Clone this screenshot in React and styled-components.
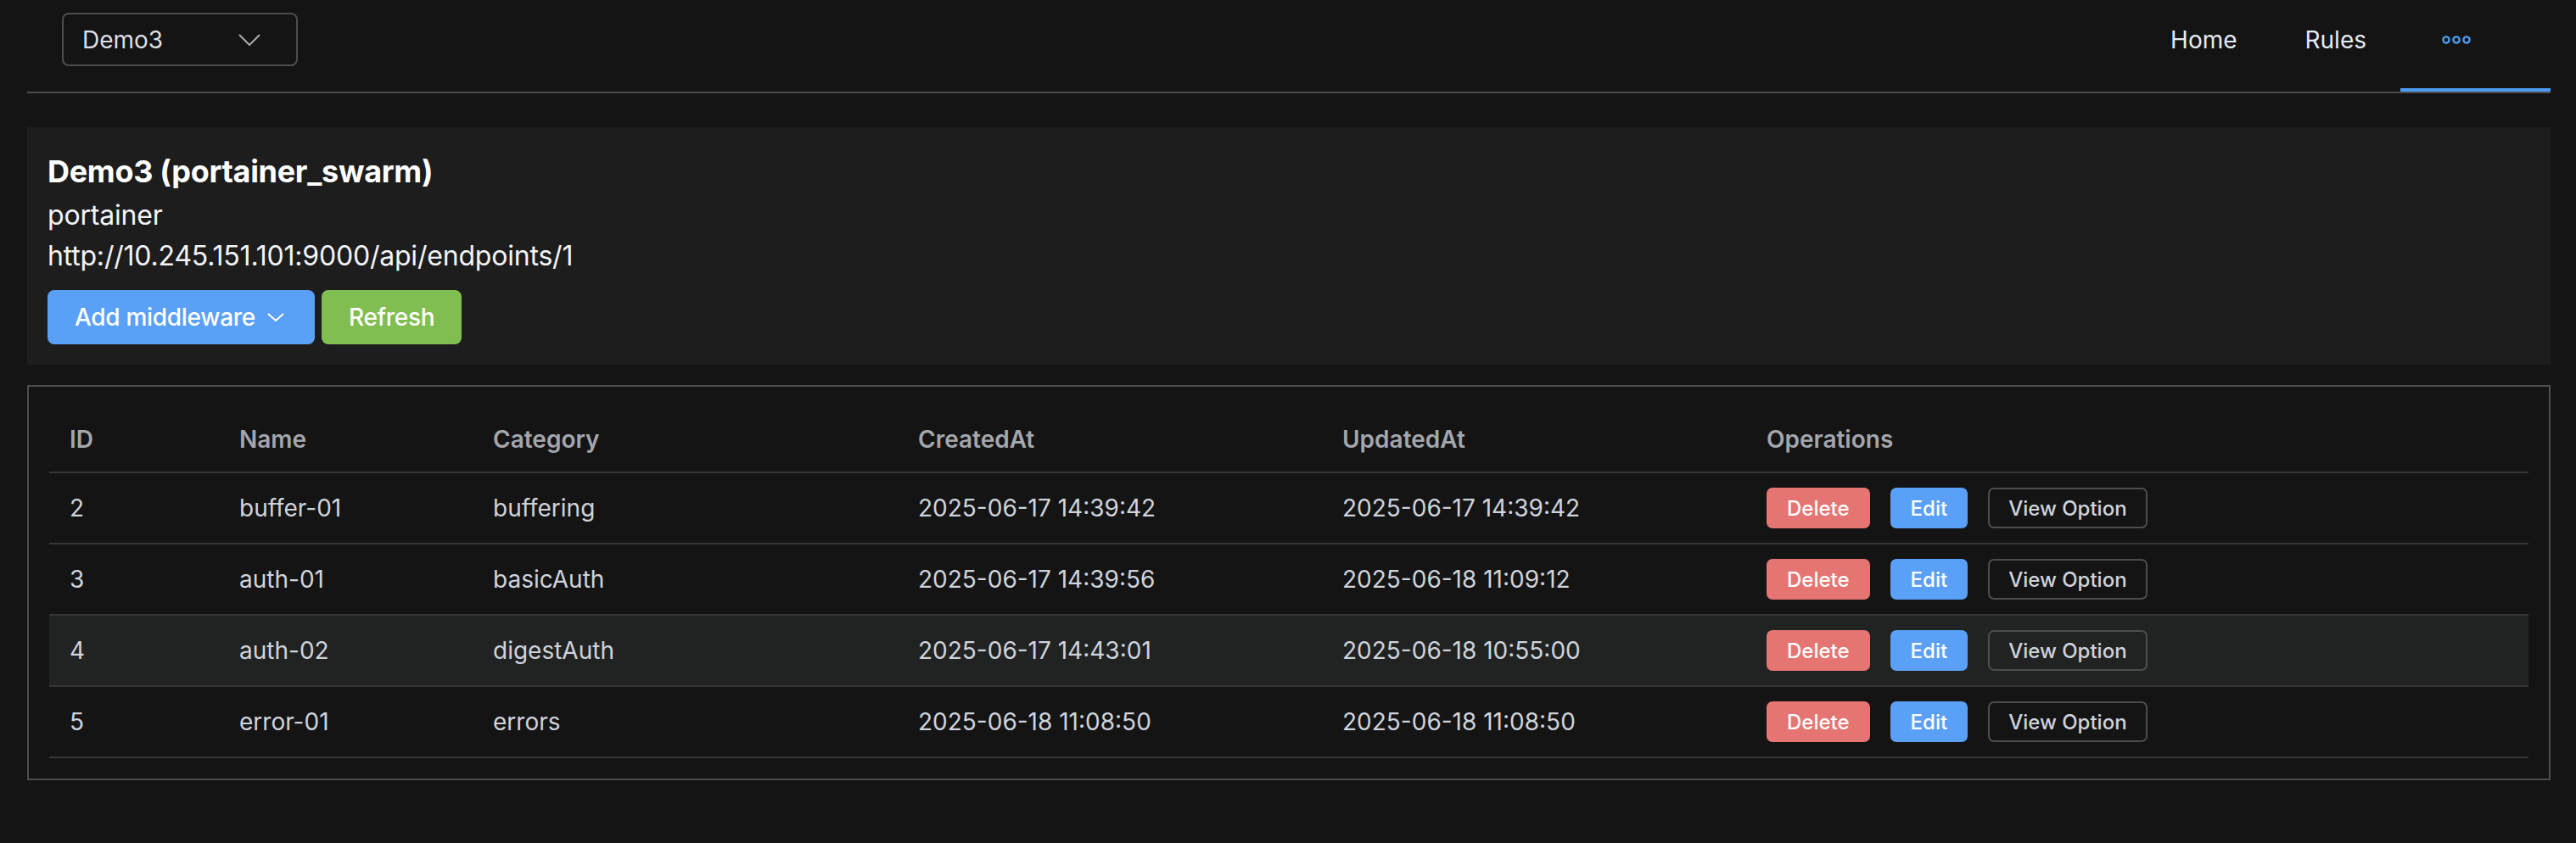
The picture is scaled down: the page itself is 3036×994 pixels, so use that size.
import React from "react";
import styled, { createGlobalStyle } from "styled-components";

const GlobalStyle = createGlobalStyle`
  html, body {
    margin: 0;
    padding: 0;
    background: #141414;
  }
  body {
    font-family: Inter, "Noto Sans", "Liberation Sans", sans-serif;
    color: #e5eaf3;
  }
`;

const Page = styled.div`
  padding: 0 30px 0 32px;
  background: #141414;
`;

const Header = styled.div`
  display: flex;
  justify-content: space-between;
  align-items: flex-start;
  height: 110px;
  box-sizing: border-box;
  border-bottom: 2px solid #4c4d4f;
`;

const Select = styled.div`
  display: flex;
  align-items: center;
  justify-content: space-between;
  margin: 15px 0 0 41px;
  width: 278px;
  height: 63px;
  box-sizing: border-box;
  padding: 0 42px 0 22px;
  border: 2px solid #4c4d4f;
  border-radius: 8px;
  font-size: 28px;
  color: #dcdfe6;
`;

const Menu = styled.nav`
  display: flex;
  height: 108px;
`;

const MenuItem = styled.div`
  display: flex;
  align-items: center;
  height: 108px;
  box-sizing: border-box;
  padding: 0 40px 10px;
  border-bottom: 4px solid ${(p) => (p.active ? "#4d9bf0" : "transparent")};
  font-size: 28px;
  color: #e5eaf3;
  width: ${(p) => p.width || "auto"};
  ${(p) => p.more && "padding-left: 49px;"}
`;

const Card = styled.section`
  margin-top: 40px;
  background: #1d1d1d;
  padding: 30px 24px 24px;
`;

const Title = styled.h3`
  margin: 0 0 6px;
  font-size: 36px;
  line-height: 44px;
  font-weight: 700;
  letter-spacing: -0.3px;
  color: #ffffff;
`;

const InfoLine = styled.div`
  font-size: 32px;
  line-height: 48px;
  letter-spacing: -0.2px;
  color: #f2f4f8;
`;

const ButtonRow = styled.div`
  display: flex;
  gap: 8px;
  margin-top: 16px;
`;

const BigButton = styled.button`
  display: flex;
  align-items: center;
  gap: 14px;
  height: 64px;
  padding: 0 ${(p) => (p.caret ? "34px" : "30px")} 0 30px;
  border: 2px solid ${(p) => p.color};
  background: ${(p) => p.color};
  border-radius: 8px;
  font-family: inherit;
  font-size: 28px;
  font-weight: 500;
  letter-spacing: -0.3px;
  color: #ffffff;
`;

const TableBox = styled.div`
  margin-top: 24px;
  border: 2px solid #4c4d4f;
  padding: 24px;
`;

const Table = styled.table`
  width: 100%;
  border-collapse: collapse;
  table-layout: fixed;
`;

const Th = styled.th`
  height: 76px;
  padding: 0 24px;
  text-align: left;
  font-size: 28px;
  font-weight: 600;
  color: #a3a6ad;
  border-bottom: 2px solid #363637;
`;

const Row = styled.tr`
  background: ${(p) => (p.hover ? "#212322" : "transparent")};
`;

const Td = styled.td`
  height: 82px;
  padding: 0 24px;
  font-size: 28px;
  color: #cfd3dc;
  border-bottom: 2px solid #363637;
  white-space: nowrap;
`;

const Ops = styled.div`
  display: flex;
  gap: 24px;
`;

const SmallButton = styled.button`
  height: 48px;
  padding: 0 22px;
  border: 2px solid ${(p) => p.color || "#4c4d4f"};
  background: ${(p) => p.color || "transparent"};
  border-radius: 7px;
  font-family: inherit;
  font-size: 24px;
  font-weight: 500;
  color: ${(p) => (p.color ? "#ffffff" : "#cfd3dc")};
`;

const Chevron = ({ w, h, color }) => (
  <svg width={w} height={h} viewBox={`0 0 ${w} ${h}`} fill="none">
    <polyline points={`1,1 ${w / 2},${h - 1} ${w - 1},1`} stroke={color} strokeWidth="2" />
  </svg>
);

const MoreDots = () => (
  <svg width="34" height="12" viewBox="0 0 34 12" fill="none">
    {[5, 17, 29].map((cx) => (
      <circle key={cx} cx={cx} cy="6" r="3.6" stroke="#4d9bf0" strokeWidth="2.4" />
    ))}
  </svg>
);

const rows = [
  { id: 2, name: "buffer-01", cat: "buffering", created: "2025-06-17 14:39:42", updated: "2025-06-17 14:39:42" },
  { id: 3, name: "auth-01", cat: "basicAuth", created: "2025-06-17 14:39:56", updated: "2025-06-18 11:09:12" },
  { id: 4, name: "auth-02", cat: "digestAuth", created: "2025-06-17 14:43:01", updated: "2025-06-18 10:55:00", hover: true },
  { id: 5, name: "error-01", cat: "errors", created: "2025-06-18 11:08:50", updated: "2025-06-18 11:08:50" },
];

const App = () => {
  return (
    <Page>
      <GlobalStyle />
      <Header>
        <Select>
          <span>Demo3</span>
          <Chevron w={26} h={14} color="#a8abb2" />
        </Select>
        <Menu>
          <MenuItem>Home</MenuItem>
          <MenuItem>Rules</MenuItem>
          <MenuItem active more width="177px">
            <MoreDots />
          </MenuItem>
        </Menu>
      </Header>

      <Card>
        <Title>Demo3 (portainer_swarm)</Title>
        <InfoLine>portainer</InfoLine>
        <InfoLine>http://10.245.151.101:9000/api/endpoints/1</InfoLine>
        <ButtonRow>
          <BigButton color="#5aa0f7" caret>
            Add middleware
            <Chevron w={20} h={10} color="#ffffff" />
          </BigButton>
          <BigButton color="#80be51">Refresh</BigButton>
        </ButtonRow>
      </Card>

      <TableBox>
        <Table>
          <colgroup>
            <col style={{ width: 200 }} />
            <col style={{ width: 299 }} />
            <col style={{ width: 501 }} />
            <col style={{ width: 500 }} />
            <col style={{ width: 500 }} />
            <col />
          </colgroup>
          <thead>
            <tr>
              <Th>ID</Th>
              <Th>Name</Th>
              <Th>Category</Th>
              <Th>CreatedAt</Th>
              <Th>UpdatedAt</Th>
              <Th>Operations</Th>
            </tr>
          </thead>
          <tbody>
            {rows.map((r) => (
              <Row key={r.id} hover={r.hover}>
                <Td>{r.id}</Td>
                <Td>{r.name}</Td>
                <Td>{r.cat}</Td>
                <Td>{r.created}</Td>
                <Td>{r.updated}</Td>
                <Td>
                  <Ops>
                    <SmallButton color="#e57572">Delete</SmallButton>
                    <SmallButton color="#5aa0f7">Edit</SmallButton>
                    <SmallButton>View Option</SmallButton>
                  </Ops>
                </Td>
              </Row>
            ))}
          </tbody>
        </Table>
      </TableBox>
    </Page>
  );
};

export default App;
